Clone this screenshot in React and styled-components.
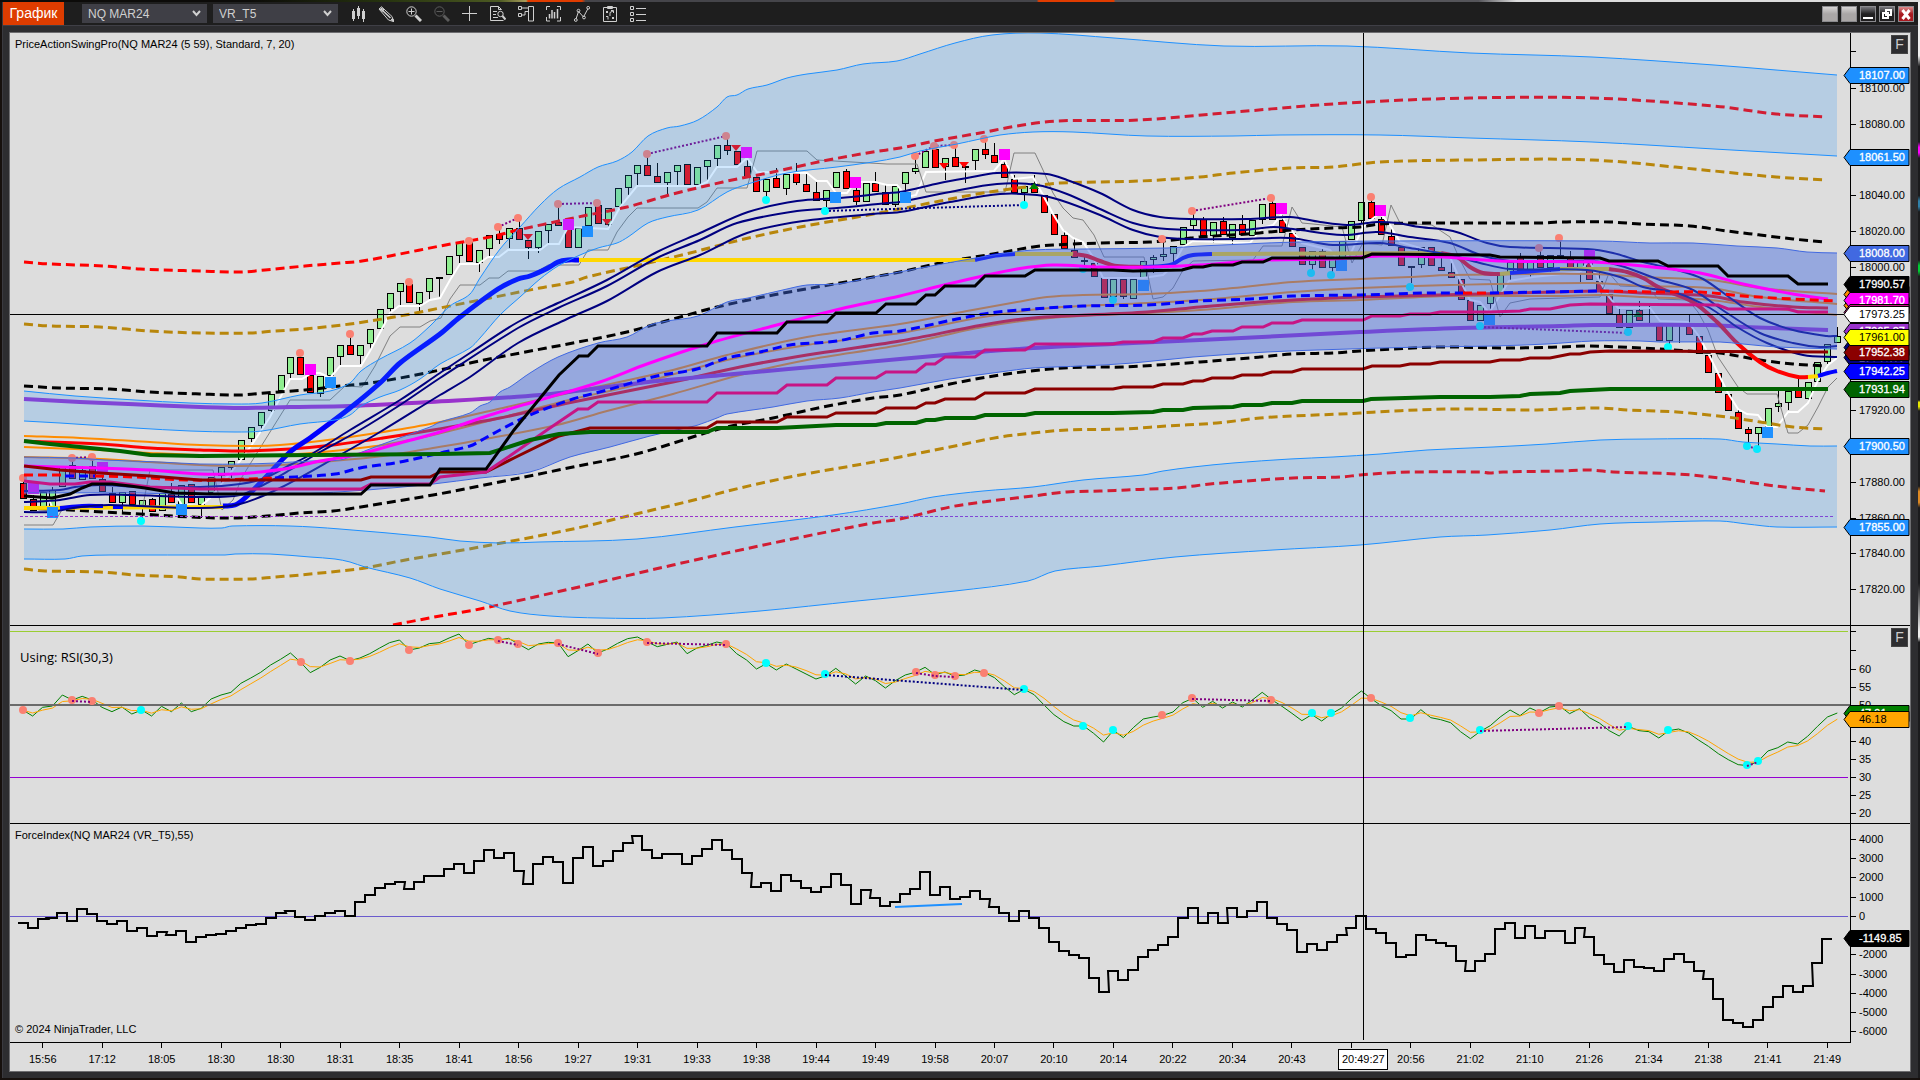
import React from 'react'
import styled, { createGlobalStyle } from 'styled-components'

const GlobalStyle = createGlobalStyle`
  * {
    box-sizing: border-box;
  }

  body {
    margin: 0;
    background: #16100d;
    font-family: 'Liberation Sans', Arial, sans-serif;
  }
`

const Desktop = styled.div`
  height: 100vh;
  display: grid;
  grid-template-columns: 2px 1fr 2px;
  grid-template-rows: 2px 1fr 2px;
`

const TopStrip = styled.div`
  grid-column: 1 / -1;
  background: linear-gradient(
    90deg,
    #0c0b09 0 13%,
    #26330f 20%,
    #4c5a22 26%,
    #a99d5c 27.4%,
    #e03c00 27.5% 30.3%,
    #45454a 30.5% 54%,
    #e03c00 54.1% 58%,
    #55555a 58.1% 77%,
    #dddddd 79% 100%
  );
`

const SideStrip = styled.div`
  grid-column: 3;
  grid-row: 2;
  background: linear-gradient(
    180deg,
    #eeeeee 0 5%,
    #1b1b1d 6% 13%,
    #ff00ff 13.5% 14%,
    #1b1b1d 14.5% 18%,
    #2f7fa8 18.5% 19%,
    #1b1b1d 19.5% 24%,
    #00cc33 24.5% 25%,
    #1b1b1d 25.5% 37%,
    #e6e600 37.2% 37.6%,
    #1b1b1d 38% 45%,
    #dd8822 45.5% 46.5%,
    #1b1b1d 47% 54%,
    #eeeeee 58.5% 59%,
    #1b1b1d 59.5% 100%
  );
`

const Window = styled.main`
  grid-column: 2;
  grid-row: 2;
  display: flex;
  flex-direction: column;
  border-left: 1px solid #3a3a40;
  background: #2d2d30;
  min-width: 0;
`

const TitleBar = styled.header`
  display: flex;
  align-items: center;
  height: 24px;
  padding-right: 4px;
  background: #1e1e1e;
  border-bottom: 1px solid #3f3f46;
`

const Caption = styled.h1`
  margin: 0 18px 0 0;
  width: 61px;
  height: 23px;
  background: #dd3c00;
  color: #fff;
  font-size: 14px;
  font-weight: 400;
  line-height: 23px;
  text-align: center;
`

const SelectBox = styled.label`
  position: relative;
  width: 125px;
  margin-right: 6px;

  svg {
    position: absolute;
    right: 6px;
    top: 6px;
    pointer-events: none;
  }
`

const Select = styled.select`
  appearance: none;
  display: block;
  width: 100%;
  height: 19px;
  padding: 0 6px;
  border: 0;
  border-radius: 0;
  background: #3f3f46;
  color: #d0d0d0;
  font-family: inherit;
  font-size: 12px;
`

const ToolButton = styled.button`
  width: 28px;
  height: 20px;
  padding: 2px 6px;
  border: 0;
  background: none;
  color: ${({ $dim }) => ($dim ? '#5c5c5c' : '#d0d0d0')};

  svg {
    display: block;
  }
`

const WindowButtons = styled.div`
  display: flex;
  gap: 3px;
  margin-left: auto;
`

const WindowButton = styled.button`
  width: 16px;
  height: 16px;
  padding: 0;
  border: 1px solid #8a8a8e;
  color: #fff;
  background: ${({ $kind }) =>
    ({
      blank: 'linear-gradient(#d6d4d4, #a9a6a6 50%)',
      dark: 'linear-gradient(#77777c, #201f20 50%)',
      close: 'linear-gradient(#dd8a8a, #a81a20 50%)'
    })[$kind]};

  svg {
    display: block;
  }
`

const Panel = styled.div`
  flex: 1;
  display: grid;
  grid-template-rows: 593fr 198fr 219fr 28px;
  margin: 7px 8px 7px 7px;
  background: #ddd;
  box-shadow: 0 0 0 1px #6d6d70;
  min-height: 0;
`

const Pane = styled.section`
  position: relative;
  display: grid;
  grid-template-columns: 1fr 60px;
  min-height: 0;
  border-bottom: ${({ $last }) => ($last ? 0 : 1)}px solid #000;
`

const Plot = styled.svg`
  display: block;
  width: 100%;
  height: 100%;
  min-height: 0;
  border-bottom: ${({ $last }) => ($last ? 1 : 0)}px solid #000;
`

const Axis = styled.svg`
  display: block;
  width: 60px;
  height: 100%;
  min-height: 0;
  overflow: visible;
  font-size: 11px;
`

const PaneLabel = styled.span`
  position: absolute;
  left: ${({ $large }) => ($large ? 10 : 5)}px;
  top: ${({ $top }) => $top}px;
  color: #000;
  font-family: ${({ $large }) => ($large ? "'Open Sans', sans-serif" : 'inherit')};
  font-size: ${({ $large }) => ($large ? 13 : 11)}px;
  line-height: 16px;
`

const Copyright = styled(PaneLabel)`
  top: auto;
  bottom: 6px;
`

const FixedButton = styled.button`
  position: absolute;
  right: 2px;
  top: 2px;
  width: 17px;
  height: 19px;
  padding: 0;
  border: 1px solid #444;
  background: #2d2d30;
  color: #ccc;
  font-family: inherit;
  font-size: 14px;
  line-height: 17px;
`

const TimeAxis = styled.div`
  position: relative;
  display: flex;
  padding: 0 53px 0 3px;
`

const TimeLabel = styled.span`
  flex: 1;
  display: flex;
  flex-direction: column;
  align-items: center;
  gap: 4px;
  font-size: 11px;
  line-height: 14px;

  &::before {
    content: '';
    width: 1px;
    height: 5px;
    background: #000;
  }
`

const TimeCursor = styled.output`
  position: absolute;
  top: 6px;
  left: calc((100% - 60px) * 0.7355);
  transform: translateX(-50%);
  width: 50px;
  height: 21px;
  border: 1px solid #000;
  background: #fff;
  font-size: 11px;
  line-height: 19px;
  text-align: center;
`

const BAR_START = 22.7
const BAR_STEP = 9.916
const barX = i => BAR_START + BAR_STEP * i
const CURSOR_X = 1363

const parse = text =>
  text
    .trim()
    .split(/\s+/)
    .map(pair => pair.split(',').map(Number))

const straight = points => 'M' + points.map(p => p.join(',')).join('L')

const smooth = points =>
  points.reduce((path, point, i) => {
    if (i === 0) return `M${point}`
    const a = points[i - 2] || points[i - 1]
    const b = points[i - 1]
    const d = points[i + 1] || point
    const third = (point[0] - b[0]) / 3
    const slopeB = (point[1] - a[1]) / (point[0] - a[0])
    const slopeC = (d[1] - b[1]) / (d[0] - b[0])
    return `${path}C${b[0] + third},${b[1] + slopeB * third} ${point[0] - third},${
      point[1] - slopeC * third
    } ${point}`
  }, '')

// direction, high, top, bottom, low
const candles = `
d478,483,499,499 d495,499,511,511 u492,492,510,510 u487,490,508,508 u467,467,487,487 d460,465,479,479
u466,470,480,480 d458,466,479,479 d477,479,492,492 d487,493,503,503 u492,492,503,512 d491,491,505,505
u500,500,506,520 d498,499,512,512 u493,493,511,511 d483,494,503,503 u485,485,506,506 d484,484,503,503
u497,497,505,518 u477,477,493,493 u467,467,476,487 u461,461,468,478 u440,440,460,460 u427,427,439,442
u412,412,426,432 u394,394,411,412 u375,375,391,393 u357,357,374,378 d354,357,375,375 d375,375,393,393
u376,376,394,397 u357,357,376,380 u345,345,357,365 d337,345,355,355 u345,345,356,364 u329,329,344,349
u309,309,329,329 u293,293,309,314 u283,283,292,306 d284,284,303,303 u292,292,304,311 u278,278,292,299
u277,277,277,297 u256,256,275,275 u242,242,256,263 d242,242,262,262 u250,250,263,272 u235,235,249,256
d227,234,240,244 u228,228,239,248 d219,228,240,240 d240,240,248,259 u231,231,248,253 u224,224,231,243
d205,222,226,226 d228,228,248,248 u228,228,248,248 u207,207,226,226 d203,205,224,224 u208,208,225,228
u188,188,207,207 u175,175,188,195 u165,165,174,186 d155,165,176,176 d163,176,183,183 u172,172,183,194
u165,165,172,186 d164,164,185,185 u167,167,185,185 u160,160,167,181 u145,145,159,166 d137,145,151,155
d151,151,165,165 d158,166,177,177 d177,177,192,192 u179,179,192,198 d168,178,188,188 u174,174,189,195
d163,173,183,185 d173,184,192,192 d182,192,201,201 u190,190,201,207 u172,172,188,188 d169,171,189,189
d188,190,202,205 u183,183,202,202 d172,183,192,192 d185,192,205,205 u186,186,205,207 u172,172,184,193
u157,168,172,174 u151,151,168,168 d149,149,168,168 u158,158,167,180 d146,157,167,167 d166,166,168,183
u149,149,161,170 d140,149,155,159 d143,155,163,163 d160,164,178,178 d175,179,193,193 u186,186,193,203
d175,183,193,193 d195,195,213,213 d214,214,235,235 d230,235,249,249 d239,250,258,258 d256,260,262,267
d263,263,277,277 d278,278,298,298 u279,279,297,297 d279,279,297,299 u279,279,299,299 u261,261,278,278
u255,257,260,273 u240,254,257,261 u246,246,254,263 u227,227,245,245 u212,219,226,231 d217,219,236,236
u222,222,236,243 d217,221,235,235 u224,224,238,245 d215,224,235,235 u220,220,236,236 u204,204,220,224
d199,203,220,220 d215,220,233,233 d233,233,247,247 d247,247,265,265 u251,251,265,270 d249,251,268,268
u258,258,268,272 u241,241,258,258 u221,221,240,240 u202,202,221,223 d199,202,219,219 d217,219,235,235
d228,236,246,246 d247,247,266,266 u266,266,266,283 u247,247,265,268 d247,247,266,266 d258,267,271,271
d263,272,278,278 d279,279,300,300 d300,300,321,321 u305,305,321,321 u295,295,304,313 u275,275,293,293
u262,262,274,281 d253,257,271,271 u261,261,275,277 d248,255,268,268 u255,255,268,272 u239,255,255,258
d251,258,271,271 u262,262,271,282 d263,263,280,280 d270,281,292,292 d294,294,314,314 d308,314,328,328
u310,310,328,328 d301,310,321,321 u305,323,323,323 d323,323,341,341 u323,323,341,345 u323,323,323,343
d315,323,335,335 d336,336,354,354 d355,355,373,373 d373,373,393,393 d394,394,411,411 d410,412,429,429
d427,429,434,443 u427,427,434,447 u408,408,427,427 u390,403,407,412 u391,391,403,410 d378,390,398,398
u382,382,399,402 u362,362,382,382 u344,344,362,364 u327,336,343,343
`
  .trim()
  .split(/\s+/)
  .map(item => [item[0], ...item.slice(1).split(',').map(Number)])

const bands = [
  {
    color: 'dodgerblue',
    opacity: 0.2,
    top: '24,391 75,396 135,400 190,403 235,404 262,403 300,395 330,391 350,383 361,371 380,359 410,343 430,326 450,306 470,294 480,278 500,249 520,227 540,205 558,189 580,177 598,167 617,161 632,152 648,136 667,128 680,126 698,120 717,107 727,97 737,95 748,89 767,85 787,78 807,74 837,70 863,64 897,61 920,54 955,43 992,35 1040,33 1114,38 1224,46 1347,46 1470,53 1592,57 1714,65 1776,70 1837,75',
    bottom:
      '24,421 60,423 90,425 135,428 190,431 235,432 262,431 300,424 335,420 350,415 361,406 380,397 400,390 420,379 440,364 470,348 480,338 500,315 520,297 540,279 558,266 580,255 598,248 617,243 628,237 648,223 667,217 698,210 727,192 748,184 787,173 837,167 873,162 900,157 920,151 957,144 980,139 1000,135 1033,132 1073,132 1147,136 1233,136 1280,135 1380,135 1470,138 1592,142 1714,149 1837,156'
  },
  {
    color: 'dodgerblue',
    opacity: 0.2,
    top: '24,529 63,529 90,527 142,526 200,528 222,528 232,526 290,526 340,529 430,537 460,541 500,543 539,542 637,539 735,527 833,515 900,504 933,497 983,491 1033,487 1083,480 1143,475 1163,471 1193,467 1233,463 1290,459 1333,457 1380,454 1427,450 1493,447 1547,444 1600,440 1650,439 1720,439 1743,442 1777,444 1810,446 1837,446',
    bottom:
      '24,559 65,559 82,556 110,555 225,555 235,554 270,554 310,557 335,559 350,562 365,567 410,578 440,589 480,601 510,611 550,616 600,618 662,618 760,611 857,601 955,591 1028,581 1055,571 1102,566 1175,557 1273,550 1360,545 1440,537 1487,535 1550,530 1600,524 1660,522 1720,521 1747,524 1777,527 1837,527'
  },
  {
    color: 'royalblue',
    opacity: 0.45,
    top: '24,457 75,458 105,460 160,462 200,464 245,464 275,463 310,461 340,460 352,456 380,445 430,427 440,422 470,413 480,406 490,402 500,392 510,387 530,373 558,357 598,343 627,337 650,325 667,321 698,316 727,302 748,298 787,289 807,285 837,284 873,277 920,268 953,262 1000,254 1033,250 1083,249 1167,248 1200,246 1267,243 1300,242 1380,241 1600,241 1650,243 1693,243 1737,246 1777,248 1807,252 1837,253',
    bottom:
      '24,493 140,493 200,495 250,495 300,494 367,490 433,484 480,478 530,472 570,457 610,447 650,436 690,427 698,425 717,418 727,414 773,407 807,401 840,398 873,392 900,388 950,379 1000,372 1033,368 1083,366 1133,363 1193,357 1267,352 1317,350 1380,348 1427,347 1493,346 1547,344 1593,341 1640,341 1660,342 1720,342 1743,344 1777,347 1837,349'
  }
]

// drawn under the translucent bands
const lowerLines = [
  // deviation levels
  { c: 'red', w: 3, dash: true, d: '24,262 50,264 105,266 140,269 200,271 240,272 265,270 305,266 340,263 362,261 400,254 440,246 490,237 518,230 550,223 583,216 627,207 673,194 723,182 773,172 823,161 873,152 900,148 940,140 980,133 1017,126 1057,121 1140,120 1224,113 1347,103 1470,98 1592,98 1714,106 1776,114 1826,117' },
  { c: 'darkgoldenrod', w: 3, dash: true, d: '24,324 50,326 100,327 150,331 200,333 250,333 275,331 305,329 350,324 400,316 440,308 490,298 540,288 573,282 587,277 640,265 690,253 740,240 800,227 857,217 900,209 940,201 983,193 1033,186 1060,183 1140,181 1200,177 1233,173 1290,168 1333,167 1380,162 1469,160 1592,160 1714,171 1776,177 1826,180' },
  { c: '#000', w: 3, dash: true, d: '24,386 60,388 110,389 150,392 200,394 240,395 265,393 305,390 340,386 370,383 400,378 440,370 470,363 520,353 573,343 627,332 673,319 717,307 773,295 823,286 873,277 900,272 940,263 993,254 1033,247 1053,245 1100,243 1150,242 1183,239 1200,237 1247,234 1293,230 1333,228 1360,227 1380,224 1420,223 1540,223 1560,222 1610,222 1640,224 1690,226 1727,231 1760,235 1793,239 1825,242' },
  { c: '#000', w: 3, dash: true, d: '24,508 70,510 103,512 140,514 190,517 233,518 267,516 300,513 333,511 367,506 433,495 480,486 573,467 640,453 723,428 773,418 823,407 873,398 900,395 950,384 1000,375 1050,369 1087,367 1123,367 1173,364 1200,362 1260,357 1293,354 1333,353 1360,351 1393,349 1440,347 1510,348 1560,347 1587,346 1620,347 1660,349 1700,352 1720,353 1760,360 1793,364 1825,366' },
  { c: 'darkgoldenrod', w: 3, dash: true, d: '24,569 45,571 100,572 135,575 180,577 200,579 250,579 275,577 300,575 340,571 365,568 400,561 440,554 480,547 573,529 640,513 690,501 740,488 800,475 857,465 900,457 950,447 1000,437 1033,433 1067,430 1123,429 1167,426 1217,423 1260,418 1293,416 1340,414 1360,413 1393,411 1450,409 1537,410 1560,409 1600,408 1627,410 1677,412 1727,417 1760,422 1793,427 1825,429' },
  { c: 'red', w: 3, dash: true, d: '393,625 440,616 480,609 583,586 673,565 773,543 873,523 900,519 950,507 983,502 1033,496 1067,492 1100,491 1150,489 1177,488 1210,484 1260,480 1293,478 1340,477 1360,475 1387,473 1410,472 1480,472 1490,473 1503,472 1560,471 1590,470 1613,472 1677,474 1720,478 1760,484 1793,488 1825,491' },
  // slow averages
  { c: 'darkorange', w: 2, d: '24,436 80,438 150,442 200,445 250,446 280,445 320,441 370,434 430,424 507,407 573,392 673,370 727,355 807,337 900,324 967,311 1017,302 1047,297 1083,295 1147,294 1200,291 1233,288 1293,282 1360,279 1410,277 1450,275 1593,274 1643,277 1710,280 1760,288 1793,291 1837,294' },
  { c: 'darkorange', w: 2, d: '24,447 100,450 150,453 233,456 283,455 333,451 383,445 433,435 500,418 573,399 627,387 727,360 807,345 900,333 983,317 1050,308 1147,303 1200,300 1293,292 1360,288 1450,285 1593,283 1643,286 1710,288 1760,297 1837,304' },
  { c: 'darkorange', w: 2, d: '24,457 100,459 150,462 200,465 240,466 280,465 333,461 383,456 433,448 480,440 557,425 607,411 673,394 740,375 807,360 900,345 983,327 1050,318 1147,313 1200,310 1293,302 1360,300 1450,296 1560,296 1600,295 1643,297 1710,300 1760,307 1837,315' },
  { c: 'red', w: 3, d: '24,441 100,444 150,448 200,450 240,451 290,449 333,445 383,438 433,430 500,418 573,402 673,382 740,367 807,355 900,341 983,325 1033,318 1147,312 1200,307 1260,302 1293,300 1360,297 1557,292 1600,291 1643,293 1710,296 1743,302 1793,307 1828,308' },
  { c: 'darkorchid', w: 4, d: '24,399 80,402 150,405 200,407 240,408 290,407 350,406 430,402 540,395 640,383 723,375 823,366 900,359 967,353 1033,348 1133,343 1200,340 1300,335 1360,332 1460,328 1560,326 1593,325 1710,325 1743,327 1828,330' },
  // trend line, coloured by direction
  { c: 'gold', w: 4, d: '24,508 223,507' },
  { c: 'blue', w: 4, d: '60,508 82,506 103,506' },
  { c: 'blue', w: 4, d: '113,507 123,507' },
  { c: 'blue', w: 5, d: '223,506 235,505 245,498 265,478 290,452 310,438 350,408 380,383 400,363 440,334 460,317 498,289 518,279 530,276 548,268 558,262 568,260 579,260' },
  { c: 'gold', w: 4, d: '579,260 975,260' },
  { c: 'blue', w: 4, d: '975,260 993,256 1015,254' },
  { c: 'gold', w: 4, d: '1015,254 1074,254' },
  { c: 'red', w: 4, d: '1073,254 1087,256 1100,261 1117,266 1143,267' },
  { c: 'blue', w: 4, d: '1143,267 1163,266 1173,264 1183,258 1193,255 1212,254' },
  { c: 'gold', w: 4, d: '1212,254 1441,253' },
  { c: 'red', w: 4, d: '1441,253 1457,257 1470,267 1483,273 1500,274' },
  { c: 'gold', w: 4, d: '1500,274 1510,273' },
  { c: 'blue', w: 4, d: '1510,273 1560,269' },
  { c: 'gold', w: 4, d: '1560,269 1609,269' },
  { c: 'red', w: 4, d: '1609,269 1627,272 1643,278 1660,288 1693,302 1717,322 1737,343 1760,362 1777,371 1798,377 1808,377' },
  { c: 'gold', w: 4, d: '1808,377 1818,376' },
  { c: 'blue', w: 4, d: '1818,376 1828,373 1837,371' },
  // fast averages
  { c: 'navy', w: 2, d: '24,491 60,490 75,487 100,485 140,487 200,487 240,484 265,478 290,465 310,455 350,430 400,400 440,373 470,353 518,322 558,303 607,280 657,252 700,233 748,212 797,201 840,198 887,193 900,192 940,183 967,178 997,173 1047,174 1067,180 1100,193 1133,210 1160,217 1190,219 1247,219 1290,217 1320,222 1347,225 1377,222 1397,223 1420,227 1453,231 1487,243 1510,247 1587,249 1613,253 1643,262 1677,270 1703,279 1733,300 1760,318 1793,330 1827,336 1837,336' },
  { c: 'navy', w: 2, d: '24,502 60,500 90,495 130,495 200,497 240,495 265,484 290,470 320,452 360,430 400,405 440,378 518,328 558,308 607,286 657,258 700,240 737,223 797,211 837,208 887,203 900,202 950,192 997,184 1037,185 1067,194 1100,209 1133,223 1167,229 1243,230 1273,227 1293,229 1343,235 1377,232 1410,237 1450,243 1483,256 1510,261 1560,261 1610,263 1660,280 1693,290 1727,313 1760,333 1793,343 1820,347 1837,346' },
  { c: 'navy', w: 2, d: '24,512 50,512 80,507 110,505 200,508 240,504 280,488 340,455 380,432 440,395 470,377 518,343 567,319 607,301 657,272 700,255 747,233 803,221 873,214 900,212 950,202 1000,194 1037,195 1060,200 1100,215 1133,230 1160,237 1187,239 1243,239 1290,238 1333,245 1380,243 1410,248 1450,255 1480,263 1510,269 1587,270 1620,277 1643,287 1677,293 1710,308 1737,327 1767,343 1803,355 1837,357' }
]

const trails = [
  { c: '#ffffff', w: 2, d: '48,497 52,507' },
  { c: '#ffffff', w: 2, d: '177,497 182,505 201,506 211,497 240,461 253,443 270,417 290,379 302,379 312,373 320,373 330,378 340,366 361,366 370,351 383,327 390,313 399,306 420,306 430,300 440,298 450,280 460,264 478,264 488,257 499,257 508,250 540,250 548,244 559,244 568,227 608,229 620,207 637,186 698,186 707,182 717,167 737,167 747,158 757,172 807,173 817,181 827,181 836,193 847,193 855,182 875,182 887,185 897,185 907,197 916,195 926,172 994,171 1004,159 1014,179 1033,177 1043,195 1053,214 1063,230 1073,238 1083,242 1093,257 1103,278 1143,278 1163,275 1172,267 1183,247 1193,241 1250,243 1262,228 1273,225 1281,215 1291,230 1302,243 1330,250 1340,263 1351,253 1363,227 1371,220 1380,213 1390,225 1400,242 1450,257 1460,280 1470,300 1480,302 1489,313 1499,297 1509,281 1533,277 1580,272 1589,260 1599,280 1609,297 1618,308 1650,308 1660,321 1688,322 1698,335 1708,353 1718,373 1728,393 1738,409 1747,414 1758,415 1767,427 1777,427 1788,412 1798,412 1808,403 1818,380 1828,365 1837,358' },
  { c: '#808080', w: 1, d: '24,525 53,525 63,508 143,505 150,470 213,470 222,510 233,500 242,477 290,400 330,400 345,386 362,387 375,366 390,336 400,327 420,327 430,321 441,318 450,299 460,285 480,285 489,278 499,278 508,271 538,271 548,265 579,265 588,250 608,250 617,232 628,217 637,208 698,208 707,202 717,188 747,188 757,151 807,151 817,160 887,164 917,164 926,192 1005,192 1014,153 1035,153 1043,170 1053,193 1063,208 1073,218 1083,220 1094,235 1104,257 1144,257 1153,299 1163,297 1173,288 1183,270 1193,261 1253,260 1263,246 1282,246 1292,207 1302,223 1313,224 1342,227 1352,263 1363,243 1382,245 1391,205 1400,223 1432,225 1450,237 1460,260 1470,279 1490,280 1500,317 1510,303 1530,299 1600,297 1609,273 1620,286 1648,287 1658,299 1688,300 1698,312 1708,330 1718,357 1728,372 1738,387 1747,394 1777,394 1788,433 1798,433 1808,425 1818,407 1828,387 1837,378' }
]

// drawn over the bands
const upperLines = [
  { c: 'magenta', w: 3, d: '24,466 100,468 150,470 200,474 235,474 260,472 290,468 320,461 360,454 400,443 440,432 490,415 540,400 600,382 647,364 707,344 773,326 840,309 900,296 940,286 983,276 1017,269 1053,265 1100,267 1150,267 1200,265 1267,260 1333,259 1380,256 1443,257 1500,261 1593,262 1643,266 1700,273 1743,284 1793,294 1828,299' },
  { c: 'red', w: 3, dash: true, d: '24,475 65,475' },
  { c: 'blue', w: 3, dash: true, d: '65,476 95,476' },
  { c: 'red', w: 3, dash: true, d: '95,476 135,477 165,479 190,480 220,480 250,479 275,478' },
  { c: 'blue', w: 3, dash: true, d: '275,478 335,474 360,468 400,462 440,453 470,446 480,441 500,430 530,415 573,399 607,390 657,376 697,369 727,358 760,352 790,345 837,341 873,333 900,331 957,319 990,313 1033,309 1083,306 1147,305 1200,301 1250,299 1293,296 1360,295 1427,293 1463,293' },
  { c: 'red', w: 3, dash: true, d: '1463,293 1490,293' },
  { c: 'blue', w: 3, dash: true, d: '1490,293 1600,291' },
  { c: 'red', w: 3, dash: true, d: '1600,291 1660,292 1700,292 1743,296 1793,299 1837,301' },
  { c: 'darkred', w: 3, step: true, d: '24,466 60,470 100,473 150,476 200,480 361,480 371,477 430,477 440,472 486,472 514,458 559,436 579,431 590,428 707,428 717,422 777,422 787,417 827,417 836,413 876,413 886,408 916,408 926,403 935,403 945,399 975,399 985,393 1025,393 1035,389 1113,389 1123,387 1153,387 1163,384 1183,384 1193,381 1203,381 1212,378 1233,378 1242,375 1262,375 1272,372 1292,372 1302,369 1363,369 1372,366 1400,366 1410,364 1430,364 1440,362 1490,362 1500,360 1520,360 1530,358 1550,358 1570,354 1580,354 1590,352 1610,351 1828,352' },
  { c: 'mediumvioletred', w: 3, step: true, d: '24,481 50,484 75,484 90,482 110,482 150,487 200,489 361,489 371,484 430,484 440,477 486,472 514,453 547,430 578,409 588,409 598,402 707,402 717,393 777,393 787,385 827,385 836,378 876,378 886,372 916,372 926,364 935,364 945,357 975,357 985,350 1025,350 1035,344 1113,344 1123,342 1153,342 1163,338 1183,338 1193,334 1202,334 1212,331 1233,331 1242,327 1263,327 1272,323 1293,323 1302,320 1363,320 1372,316 1400,316 1410,314 1430,314 1440,312 1490,312 1520,311 1530,309 1550,309 1570,305 1590,304 1718,305 1728,309 1788,309 1798,312 1828,312' },
  { c: 'darkgreen', w: 4, step: true, d: '24,441 50,444 80,447 120,451 150,455 200,456 440,454 490,453 530,440 559,434 590,432 707,432 717,428 777,428 836,425 876,425 886,423 916,423 926,420 935,420 945,418 975,418 985,415 1025,415 1035,413 1113,413 1153,412 1163,410 1183,410 1193,408 1233,407 1242,405 1262,405 1272,403 1292,403 1302,401 1363,401 1371,399 1440,397 1490,397 1520,396 1530,394 1560,393 1570,391 1590,390 1610,389 1828,389' },
  { c: '#000', w: 3, step: true, d: '24,496 52,498 70,494 82,488 92,484 112,484 130,486 145,488 175,493 210,494 361,494 371,485 430,485 440,469 486,469 514,430 559,375 579,356 588,356 598,346 707,346 717,333 777,333 787,322 827,322 836,313 876,313 886,304 916,304 926,295 935,295 945,286 975,286 985,276 1025,276 1035,270 1113,270 1133,271 1182,270 1193,267 1203,267 1212,265 1233,265 1242,262 1263,262 1272,258 1362,258 1372,254 1490,255 1500,257 1600,258 1609,261 1658,261 1668,266 1718,266 1728,276 1788,276 1798,284 1828,284' }
]

const priceMarks = {
  salmon: '23,478 72,458 92,457 300,353 350,334 409,282 469,241 498,227 518,218 558,204 597,203 647,154 726,136 915,156 934,146 954,145 984,139 1162,239 1192,211 1271,198 1371,197 1539,248 1559,238',
  cyan: '141,521 766,200 825,211 1024,205 1083,269 1113,300 1311,273 1331,275 1410,287 1480,326 1628,332 1668,347 1747,446 1757,449'
}

const squares = {
  magenta: '33,488 102,467 310,369 568,224 746,152 855,182 1004,154 1281,208 1380,210 1589,255',
  dodgerblue: '52,512 181,509 330,382 587,231 835,197 905,197 1143,285 1341,265 1489,319 1767,432'
}

const priceLinks = [
  ['purple', '72,458 92,457'],
  ['purple', '498,227 518,218'],
  ['purple', '558,204 597,203'],
  ['purple', '647,154 726,136'],
  ['purple', '915,156 934,146 954,145'],
  ['purple', '1192,211 1271,198'],
  ['purple', '1480,327 1628,333'],
  ['purple', '1747,446 1757,449'],
  ['navy', '825,211 1024,205']
]

const rsi = [
  270, 288, 262, 258, 225, 240, 229, 240, 262, 275, 261, 282, 270, 288, 259, 275, 249, 275, 265, 237,
  225, 217, 190, 174, 157, 135, 118, 99, 126, 158, 142, 120, 108, 122, 114, 101, 84, 68, 60, 90,
  84, 71, 68, 54, 42, 74, 64, 55, 60, 55, 72, 89, 72, 67, 69, 110, 92, 72, 99, 87,
  70, 56, 51, 66, 80, 73, 66, 101, 84, 76, 66, 72, 101, 120, 147, 131, 150, 132, 147, 162,
  177, 167, 145, 168, 192, 168, 182, 204, 182, 165, 157, 142, 164, 156, 168, 165, 150, 158, 173, 200,
  224, 208, 224, 255, 284, 305, 318, 318, 340, 366, 331, 353, 323, 297, 291, 286, 276, 248, 235, 262,
  244, 264, 246, 261, 240, 217, 240, 259, 280, 302, 284, 303, 281, 264, 236, 213, 236, 257, 272, 297,
  297, 269, 293, 299, 308, 335, 356, 334, 317, 291, 270, 287, 264, 277, 261, 258, 281, 266, 293, 309,
  332, 348, 320, 332, 335, 354, 332, 327, 339, 360, 379, 401, 419, 434, 437, 424, 393, 383, 366, 372,
  349, 319, 291, 279
]

const rsiMarks = {
  salmon: '23,710 72,700 92,701 301,662 350,661 409,650 469,645 498,640 518,644 558,643 598,653 647,642 726,644 916,672 935,675 955,676 984,673 1162,715 1192,698 1271,700 1371,698 1539,713 1559,706',
  cyan: '141,710 766,663 825,674 1024,689 1083,726 1113,730 1312,713 1331,713 1410,718 1480,730 1628,726 1668,730 1747,765 1758,761'
}

const rsiLinks = [
  ['purple', '72,701 92,702'],
  ['purple', '498,641 518,645'],
  ['purple', '558,644 598,654'],
  ['purple', '647,643 726,645'],
  ['navy', '825,675 1024,690'],
  ['purple', '916,673 935,676 955,677'],
  ['purple', '1192,699 1271,701'],
  ['purple', '1480,731 1628,727'],
  ['purple', '1747,766 1758,762']
]

const force = [
  909, 924, 897, 894, 879, 903, 867, 882, 903, 912, 903, 933, 924, 948, 936, 945, 933, 966, 951, 945,
  942, 933, 924, 915, 912, 894, 879, 873, 891, 900, 888, 879, 873, 888, 846, 825, 804, 792, 786, 807,
  786, 768, 768, 747, 732, 759, 723, 690, 714, 699, 753, 792, 732, 711, 726, 789, 714, 681, 738, 723,
  693, 669, 648, 690, 714, 702, 702, 732, 708, 687, 660, 690, 717, 759, 801, 789, 813, 765, 783, 804,
  816, 801, 762, 795, 852, 810, 834, 858, 846, 822, 807, 756, 825, 801, 837, 831, 813, 837, 861, 879,
  903, 873, 894, 924, 966, 993, 1005, 1014, 1074, 1116, 1053, 1080, 1050, 1011, 990, 975, 951, 894, 864, 909,
  879, 909, 864, 891, 873, 846, 894, 912, 930, 996, 972, 990, 966, 945, 924, 888, 927, 939, 969, 1011,
  1005, 945, 960, 969, 978, 1023, 1053, 1023, 1002, 927, 909, 954, 918, 954, 933, 933, 969, 924, 951, 1005,
  1032, 1056, 1020, 1041, 1044, 1053, 1017, 1002, 1026, 1053, 1077, 1137, 1200, 1209, 1221, 1200, 1161, 1131, 1098, 1116,
  1098, 1029, 957
]

const toY = v => 620 + v / 3

const rsiLine = rsi.map((v, i) => [barX(i), toY(v)])

// average of the RSI over three bars
const rsiAverage = rsi
  .reduce((all, v, i) => [...all, i ? (all[i - 1] + v) / 2 : v], [])
  .map((v, i) => [barX(i), toY(v)])

const forceLine = force.flatMap((v, i) => [
  [Math.round(barX(i) - 5), Math.round(toY(v))],
  [Math.round(barX(i) + 5), Math.round(toY(v))]
])

const times =
  '15:56 17:12 18:05 18:30 18:30 18:31 18:35 18:41 18:56 19:27 19:31 19:33 19:38 19:44 19:49 19:58 20:07 20:10 20:14 20:22 20:34 20:43 20:49 20:56 21:02 21:10 21:26 21:34 21:38 21:41 21:49'.split(
    ' '
  )

const priceTicks = [
  [51, ''],
  ...[18100, 18080, 18040, 18020, 18000, 17920, 17880, 17860, 17840, 17820].map(price => [
    Math.round(88 + (18100 - price) * 1.79),
    price.toFixed(2)
  ])
]

const rsiTicks = [
  [631, ''],
  [650, ''],
  [669, '60'],
  [687, '55'],
  [705, '50'],
  [741, '40'],
  [759, '35'],
  [777, '30'],
  [795, '25'],
  [813, '20']
]

const forceTicks = [
  [839, '4000'],
  [858, '3000'],
  [877, '2000'],
  [897, '1000'],
  [916, '0'],
  [954, '-2000'],
  [974, '-3000'],
  [993, '-4000'],
  [1012, '-5000'],
  [1031, '-6000']
]

const priceFlags = [
  { y: 75, text: '18107.00', fill: 'dodgerblue' },
  { y: 157, text: '18061.50', fill: 'dodgerblue' },
  { y: 253, text: '18008.00', fill: 'royalblue' },
  { y: 294, text: '', fill: 'darkorange' },
  { y: 305, text: '', fill: 'darkorange' },
  { y: 284, text: '17990.57', fill: '#000' },
  { y: 300, text: '17981.70', fill: 'magenta' },
  { y: 312, text: '', fill: 'mediumvioletred' },
  { y: 331, text: '17965.87', fill: 'darkorchid' },
  { y: 347, text: '', fill: 'navy' },
  { y: 357, text: '17946.57', fill: 'navy' },
  { y: 314, text: '17973.25', fill: '#fff', ink: '#000' },
  { y: 352, text: '17952.38', fill: 'darkred' },
  { y: 337, text: '17961.00', fill: 'yellow', ink: '#000' },
  { y: 371, text: '17942.25', fill: 'blue' },
  { y: 389, text: '17931.94', fill: 'darkgreen' },
  { y: 446, text: '17900.50', fill: 'dodgerblue' },
  { y: 527, text: '17855.00', fill: 'dodgerblue' }
]

const rsiFlags = [
  { y: 713, text: '47.91', fill: 'green' },
  { y: 719, text: '46.18', fill: 'orange', ink: '#000' }
]

const forceFlags = [{ y: 938, text: '-1149.85', fill: '#000' }]

const Line = ({ line }) => (
  <path
    d={(line.step ? straight : smooth)(parse(line.d))}
    fill="none"
    stroke={line.c}
    strokeWidth={line.w}
    strokeDasharray={line.dash ? '9 5' : undefined}
  />
)

const Dots = ({ marks }) =>
  Object.entries(marks).map(([color, list]) =>
    parse(list).map(([x, y]) => <circle key={`${x}-${y}`} cx={x} cy={y} r="4" fill={color} />)
  )

const Links = ({ links }) =>
  links.map(([color, list]) => (
    <path key={list} d={straight(parse(list))} fill="none" stroke={color} strokeWidth="2" strokeDasharray="2 2" />
  ))

const Candle = ({ index, candle }) => {
  const [direction, high, top, bottom, low] = candle
  const x = Math.round(barX(index))
  return (
    <g shapeRendering="crispEdges">
      <rect x={x} y={high} width="1" height={Math.max(low - high, 1)} fill="#000" />
      <rect
        x={x - 2.5}
        y={top + 0.5}
        width="6"
        height={Math.max(bottom - top - 1, 1)}
        fill={direction === 'u' ? 'lightgreen' : 'red'}
        stroke="#000"
        strokeWidth="1"
      />
    </g>
  )
}

const Band = ({ band }) => {
  const top = smooth(parse(band.top))
  const bottom = smooth(parse(band.bottom))
  const back = straight(parse(band.bottom).reverse()).replace('M', 'L')
  return (
    <g>
      <path d={`${top}${back}Z`} fill={band.color} fillOpacity={band.opacity} />
      <path d={top} fill="none" stroke={band.color} />
      <path d={bottom} fill="none" stroke={band.color} />
    </g>
  )
}

const Scale = ({ top, height, ticks, flags }) => (
  <Axis viewBox={`1850 ${top} 60 ${height}`}>
    <rect x="1850" y={top} width="1" height={height} />
    {ticks.map(([y, text]) => (
      <g key={y}>
        <rect x="1851" y={y} width="5" height="1" />
        <text x="1859" y={y + 4}>
          {text}
        </text>
      </g>
    ))}
    {flags.map(flag => (
      <g key={flag.y}>
        <path
          d={`M1844,${flag.y + 0.5}L1850,${flag.y - 7.5}H1909V${flag.y + 8.5}H1850Z`}
          fill={flag.fill}
          stroke="#000"
        />
        <text x="1859" y={flag.y + 4} fill={flag.ink || '#fff'} stroke={flag.ink ? 'none' : '#fff'} strokeWidth="0.3">
          {flag.text}
        </text>
      </g>
    ))}
  </Axis>
)

const PricePlot = () => (
  <Plot viewBox="10 33 1840 592" preserveAspectRatio="none">
    {candles.map((candle, i) => (
      <Candle key={i} index={i} candle={candle} />
    ))}
    {trails.map(line => (
      <Line key={line.d} line={{ ...line, step: true }} />
    ))}
    {lowerLines.map(line => (
      <Line key={line.d} line={line} />
    ))}
    <Links links={priceLinks} />
    <Dots marks={priceMarks} />
    {parse('528,237 607,222 736,148 944,166 964,165').map(([x, y]) => (
      <path key={x} d={`M${x - 5},${y - 3}h10l-5,6z`} fill="red" />
    ))}
    {parse('1034,186 1638,314').map(([x, y]) => (
      <path key={x} d={`M${x - 5},${y + 3}h10l-5,-6z`} fill="green" />
    ))}
    {Object.entries(squares).map(([color, list]) =>
      parse(list).map(([x, y]) => (
        <rect key={x} x={x - 5} y={y - 5} width="11" height="11" fill={color} />
      ))
    )}
    <path d="M20,516.5H1833" stroke="darkorchid" strokeDasharray="3 2" />
    {bands.map(band => (
      <Band key={band.top} band={band} />
    ))}
    {upperLines.map(line => (
      <Line key={line.d} line={line} />
    ))}
    <rect x="10" y="314" width="1840" height="1" />
    <rect x={CURSOR_X} y="33" width="1" height="592" />
  </Plot>
)

const RsiPlot = () => (
  <Plot viewBox="10 626 1840 197" preserveAspectRatio="none">
    <rect x="10" y="631" width="1838" height="1" fill="yellowgreen" />
    <rect x="10" y="777" width="1838" height="1" fill="darkviolet" />
    <path d={straight(rsiLine)} fill="none" stroke="green" />
    <path d={straight(rsiAverage)} fill="none" stroke="orange" />
    <rect x="10" y="704" width="1840" height="2" fill="#6b6b6b" />
    <Dots marks={rsiMarks} />
    <Links links={rsiLinks} />
    <rect x={CURSOR_X} y="626" width="1" height="197" />
  </Plot>
)

const ForcePlot = () => (
  <Plot $last viewBox="10 824 1840 218" preserveAspectRatio="none">
    <rect x="10" y="916" width="1838" height="1" fill="slateblue" />
    <path d={straight(forceLine)} fill="none" stroke="#000" strokeWidth="2" />
    <path d="M895,907L962,904" stroke="dodgerblue" strokeWidth="2" />
    <rect x={CURSOR_X} y="824" width="1" height="216" />
  </Plot>
)

const Icon = ({ children, width = 1 }) => (
  <svg width="16" height="16" viewBox="0 0 16 16" fill="none" stroke="currentColor" strokeWidth={width}>
    {children}
  </svg>
)

const Chevron = () => (
  <svg width="9" height="7" viewBox="0 0 9 7" fill="none" stroke="#d0d0d0" strokeWidth="2">
    <path d="M1 1l3.500 4L8 1" />
  </svg>
)

const tools = [
  {
    name: 'Bars',
    icon: (
      <>
        <path d="M3.500 3v12M8.500 0v13M13.500 3v13" />
        <path d="M2 5h3v8H2zM7 2h3v8H7zM12 5h3v8h-3z" fill="currentColor" stroke="none" />
      </>
    )
  },
  {
    name: 'Drawing tools',
    icon: (
      <>
        <path d="M1 3L3.500 .8 14 10.500l1.500 5-5-1.500z" />
        <path d="M2.500 2.500l10 9.500M4.500 1.800L2 4.200M6 3L3.500 5.600" strokeWidth="1.500" />
        <path d="M13 13.500l2.800 2.300-.8-3z" fill="currentColor" />
      </>
    )
  },
  {
    name: 'Zoom in',
    icon: (
      <>
        <circle cx="5.500" cy="5.500" r="4.700" />
        <path d="M5.500 2.500v6M2.500 5.500h6" />
        <path d="M9.500 9.500l5.500 5.500" strokeWidth="3" />
      </>
    )
  },
  {
    name: 'Zoom out',
    dim: true,
    icon: (
      <>
        <circle cx="5.500" cy="5.500" r="4.700" />
        <path d="M2.500 5.500h6" />
        <path d="M9.500 9.500l5.500 5.500" strokeWidth="3" />
      </>
    )
  },
  { name: 'Crosshair', icon: <path d="M7.500 0v15M0 7.500h15" /> },
  {
    name: 'Data box',
    icon: (
      <>
        <path d="M13.500 14.500H.5V.5h8l3 3M8.500 .5v3h3M3 5.500h4M3 8.500h3M3 11.500h5" />
        <circle cx="10.500" cy="8" r="2.700" />
        <path d="M12.500 10l3 3.500" strokeWidth="2" />
      </>
    )
  },
  {
    name: 'Chart trader',
    icon: <path d="M.5 .5h3v3h-3zM.5 7.500h3v3h-3zM3.500 2h7M3.500 9h3.500V5.500h3.500M10.500 .5h5v14.500h-5z" />
  },
  {
    name: 'Data series',
    icon: (
      <>
        <path d="M.5 4V.5H4M11 .5h3.500V4M.5 11v4H4M11 15h3.500v-4" />
        <path d="M3.500 8v4.500M6 4v8.500M8.500 6v6.500M11.500 3v9.500" strokeWidth="1.500" />
      </>
    )
  },
  {
    name: 'Indicators',
    icon: (
      <>
        <path d="M2 13L4.500 5.500l5 5.500L14 2.500" />
        <circle cx="1.800" cy="14" r="1.400" />
        <circle cx="4.500" cy="4.700" r="1.400" />
        <circle cx="10" cy="11.500" r="1.400" />
        <circle cx="14.200" cy="1.800" r="1.400" />
      </>
    )
  },
  {
    name: 'Strategies',
    icon: (
      <>
        <path d="M1.500 1.500h13v14h-13zM5.500 .5h5v2h-5z" />
        <path d="M4 5l2 2M6 5L4 7M10 11l2 2M12 11l-2 2M8 10V6.500l3-1.500M9 4.500h2.500V7M4 10.500h2v3" />
      </>
    )
  },
  {
    name: 'Properties',
    icon: <path d="M.5 .5h3v3h-3zM.5 6.500h3v3h-3zM.5 12.500h3v3h-3zM6 2.500h10M6 8.500h10M6 14.500h10" />
  }
]

const App = () => (
  <Desktop>
    <GlobalStyle />
    <TopStrip />
    <Window>
      <TitleBar>
        <Caption>График</Caption>
        <SelectBox>
          <Select aria-label="Instrument" defaultValue="NQ MAR24">
            <option>NQ MAR24</option>
          </Select>
          <Chevron />
        </SelectBox>
        <SelectBox>
          <Select aria-label="Interval" defaultValue="VR_T5">
            <option>VR_T5</option>
          </Select>
          <Chevron />
        </SelectBox>
        {tools.map(tool => (
          <ToolButton key={tool.name} type="button" aria-label={tool.name} $dim={tool.dim}>
            <Icon>{tool.icon}</Icon>
          </ToolButton>
        ))}
        <WindowButtons>
          <WindowButton type="button" aria-label="Link instrument" $kind="blank" />
          <WindowButton type="button" aria-label="Link interval" $kind="blank" />
          <WindowButton type="button" aria-label="Minimize" $kind="dark">
            <svg width="14" height="14" viewBox="0 0 14 14">
              <path d="M2 10h10v2H2z" fill="currentColor" />
            </svg>
          </WindowButton>
          <WindowButton type="button" aria-label="Restore" $kind="dark">
            <svg width="14" height="14" viewBox="0 0 14 14" fill="none" stroke="currentColor" strokeWidth="2">
              <path d="M6 3h5v5H6zM3 6h5v5H3z" />
            </svg>
          </WindowButton>
          <WindowButton type="button" aria-label="Close" $kind="close">
            <svg width="14" height="14" viewBox="0 0 14 14" stroke="currentColor" strokeWidth="3">
              <path d="M3.500 3l7 9M10.500 3l-7 9" />
            </svg>
          </WindowButton>
        </WindowButtons>
      </TitleBar>
      <Panel>
        <Pane>
          <PricePlot />
          <Scale top={33} height={592} ticks={priceTicks} flags={priceFlags} />
          <PaneLabel $top={3}>PriceActionSwingPro(NQ MAR24 (5 59), Standard, 7, 20)</PaneLabel>
          <FixedButton type="button">F</FixedButton>
        </Pane>
        <Pane>
          <RsiPlot />
          <Scale top={626} height={197} ticks={rsiTicks} flags={rsiFlags} />
          <PaneLabel $large $top={23}>
            Using: RSI(30,3)
          </PaneLabel>
          <FixedButton type="button">F</FixedButton>
        </Pane>
        <Pane $last>
          <ForcePlot />
          <Scale top={824} height={219} ticks={forceTicks} flags={forceFlags} />
          <PaneLabel $top={3}>ForceIndex(NQ MAR24 (VR_T5),55)</PaneLabel>
          <Copyright>© 2024 NinjaTrader, LLC</Copyright>
        </Pane>
        <TimeAxis>
          {times.map((time, i) => (
            <TimeLabel key={i}>{time}</TimeLabel>
          ))}
          <TimeCursor>20:49:27</TimeCursor>
        </TimeAxis>
      </Panel>
    </Window>
    <SideStrip />
  </Desktop>
)

export default App
